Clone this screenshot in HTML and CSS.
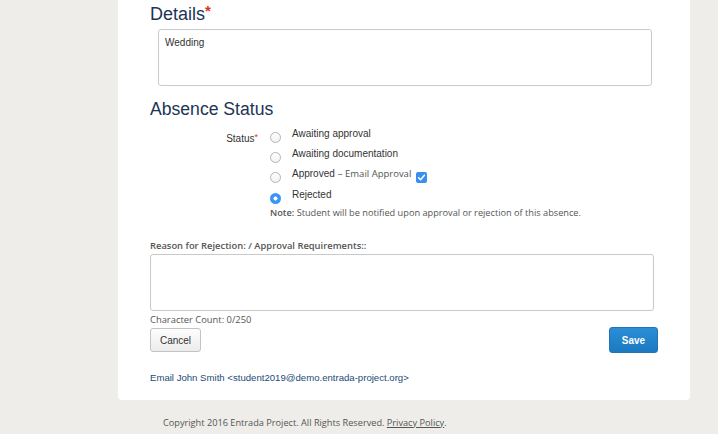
FILE: index.html
```html
<!DOCTYPE html>
<html>
<head>
<meta charset="utf-8">
<link rel="stylesheet" href="styles.css">
</head>
<body>
<div class="page">
  <div class="panel">
    <h2 class="heading">Details<span class="req">*</span></h2>
    <div class="details-box">Wedding</div>
    <h2 class="heading heading-2">Absence Status</h2>
    <div class="status">
      <div class="status-label">Status<span class="req-small">*</span></div>
      <div class="options">
        <div class="opt"><span class="radio"></span><span class="opt-text">Awaiting approval</span></div>
        <div class="opt"><span class="radio"></span><span class="opt-text">Awaiting documentation</span></div>
        <div class="opt"><span class="radio"></span><span class="opt-text">Approved</span><span class="email-approval">– Email Approval</span><span class="check"><svg width="11" height="11" viewBox="0 0 11 11"><path d="M2.6 5.8 L4.6 7.8 L8.4 3.2" fill="none" stroke="#fff" stroke-width="1.5" stroke-linecap="round" stroke-linejoin="round"/></svg></span></div>
        <div class="opt"><span class="radio radio-on"></span><span class="opt-text">Rejected</span></div>
        <div class="note"><b>Note:</b> Student will be notified upon approval or rejection of this absence.</div>
      </div>
    </div>
    <div class="reason-label">Reason for Rejection: / Approval Requirements::</div>
    <div class="reason-box"></div>
    <div class="count">Character Count: 0/250</div>
    <div class="actions">
      <button class="btn btn-cancel">Cancel</button>
      <button class="btn btn-save">Save</button>
    </div>
    <div class="email">Email John Smith &lt;student2019@demo.entrada-project.org&gt;</div>
  </div>
  <div class="footer">Copyright 2016 Entrada Project. All Rights Reserved. <span class="link">Privacy Policy</span>.</div>
</div>
</body>
</html>
```
FILE: styles.css
```css
* { box-sizing: border-box; }
html, body { margin: 0; padding: 0; }
body {
  background: #eeede9;
  font-family: "Liberation Sans", Arial, sans-serif;
  color: #333;
  width: 718px;
  height: 434px;
  overflow: hidden;
}
.page {
  padding-left: 118px;
  width: 690px;
}
.panel {
  background: #fff;
  border-radius: 0 0 4px 4px;
  padding: 2px 32px 0 32px;
  height: 400px;
}
.heading {
  margin: 0;
  font-family: "Liberation Sans", sans-serif;
  font-weight: normal;
  font-size: 18px;
  line-height: 24px;
  height: 24px;
  color: #1c3557;
}
.heading-2 {
  margin-top: 11px;
  font-size: 17.6px;
}
.req {
  color: #e2321b;
  font-weight: bold;
  font-size: 15px;
  line-height: 0;
  vertical-align: 4px;
}
.details-box {
  margin: 3px 0 0 8px;
  width: 494px;
  height: 57px;
  border: 1px solid #c9c9c9;
  border-radius: 3px;
  padding: 7px 6px;
  font-size: 10px;
  color: #333;
}
.status {
  display: grid;
  grid-template-columns: 108px 1fr;
  margin-top: 4px;
}
.status-label {
  text-align: right;
  font-size: 10px;
  line-height: 20px;
  padding-top: 4px;
  color: #333;
}
.req-small { color: #e2321b; font-size: 9px; line-height: 0; vertical-align: 2px; }
.options {
  padding-left: 12px;
}
.opt {
  display: flex;
  align-items: center;
  height: 20.3px;
  font-size: 10px;
}
.radio {
  width: 11px;
  height: 11px;
  border: 1px solid #b4b4b4;
  border-radius: 50%;
  background: linear-gradient(#fff, #f2f2f2);
  margin-right: 11px;
  margin-top: 4px;
  flex: none;
}
.radio-on {
  border: none;
  background: radial-gradient(circle, #fff 0 1.8px, #3a95f5 2.3px);
}
.opt-text { margin-top: -4px; }
.email-approval {
  font-family: "Open Sans", sans-serif;
  font-size: 9.5px;
  color: #555;
  margin-left: 3px;
  margin-top: -4px;
}
.check {
  width: 11px;
  height: 11px;
  border-radius: 2px;
  background: #3a8ef0;
  margin-left: 5px;
  margin-top: 3px;
  display: inline-flex;
}
.note {
  font-family: "Open Sans", sans-serif;
  font-size: 9.2px;
  color: #555;
  margin-top: 0px;
  line-height: 13px;
}
.note b { font-weight: 600; }
.reason-label {
  font-family: "Open Sans", sans-serif;
  font-size: 9.4px;
  font-weight: 600;
  color: #555;
  margin-top: 20px;
  line-height: 13px;
}
.reason-box {
  margin-top: 2px;
  width: 504px;
  height: 57px;
  border: 1px solid #c9c9c9;
  border-radius: 3px;
}
.count {
  font-family: "Open Sans", sans-serif;
  font-size: 9.4px;
  color: #555;
  line-height: 13px;
  margin-top: 2px;
}
.actions {
  display: flex;
  justify-content: space-between;
  align-items: center;
  width: 508px;
  margin-top: 1px;
}
.btn {
  font-family: "Liberation Sans", Arial, sans-serif;
  padding: 0;
  cursor: pointer;
}
.btn-cancel {
  width: 51px;
  height: 24px;
  font-size: 10px;
  color: #333;
  background: linear-gradient(#fdfdfd, #ececec);
  border: 1px solid #c3c3c3;
  border-radius: 3px;
}
.btn-save {
  width: 49px;
  height: 26px;
  font-size: 10px;
  font-weight: bold;
  color: #fff;
  background: linear-gradient(#2a8ed6, #1b79c0);
  border: 1px solid #2275b5;
  border-radius: 3px;
}
.email {
  margin-top: 19px;
  font-size: 9.6px;
  line-height: 12px;
  color: #1d4a78;
}
.footer {
  font-family: "Open Sans", sans-serif;
  font-size: 9.2px;
  line-height: 13px;
  color: #555;
  padding: 16px 0 0 45px;
}
.link { text-decoration: underline; }
```
